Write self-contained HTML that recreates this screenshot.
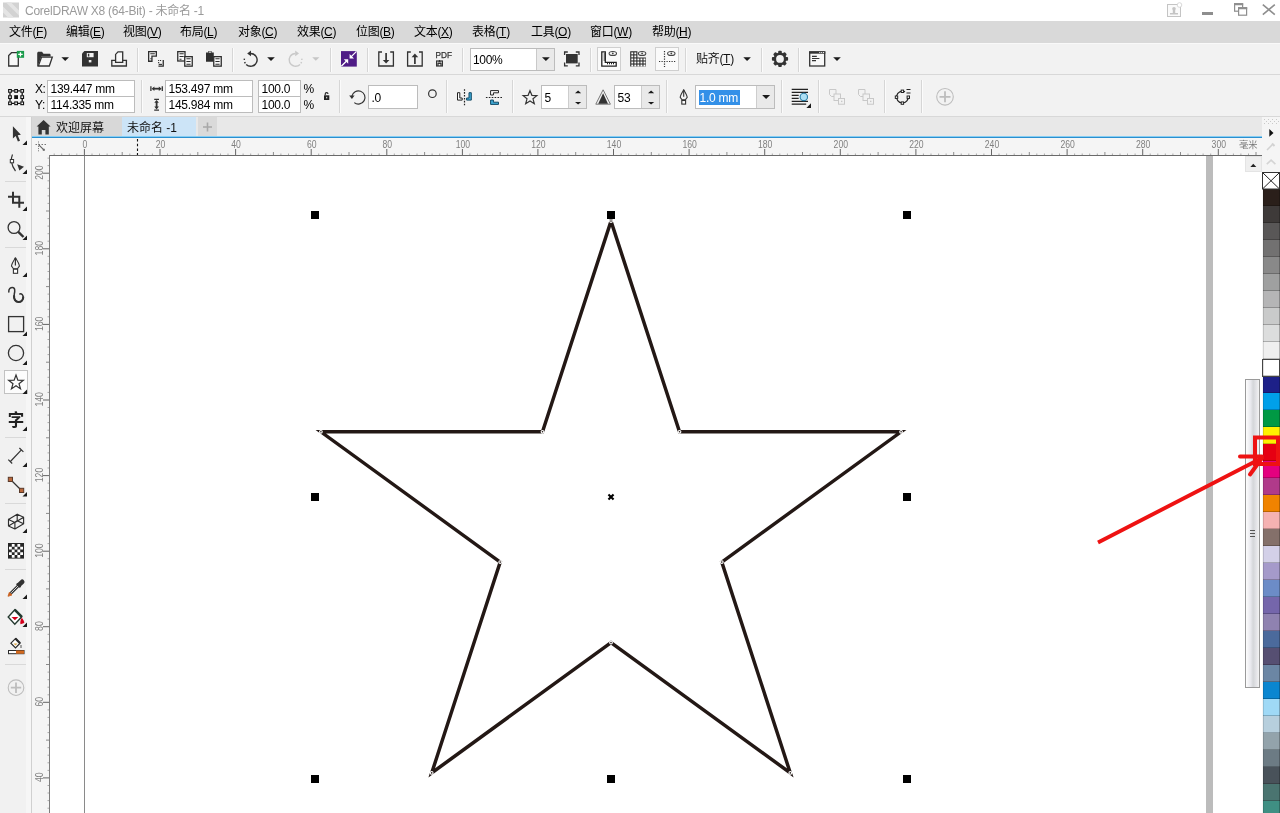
<!DOCTYPE html>
<html><head><meta charset="utf-8"><title>CorelDRAW X8 (64-Bit) - 未命名 -1</title>
<style>
*{box-sizing:border-box;margin:0;padding:0}
html,body{width:1280px;height:813px;overflow:hidden;background:#fff}
body{font-family:"Liberation Sans","Noto Sans CJK SC",sans-serif;font-size:12px;color:#000;position:relative}
#app{position:absolute;left:0;top:0;width:1280px;height:813px;will-change:transform}
.abs,#app div,#app span,#app svg{position:absolute}
#title{left:0;top:0;width:1280px;height:21px;background:#fff}
#title .t{left:25px;top:4px;color:#9a9a9a;font-size:12px;line-height:15px;white-space:nowrap;letter-spacing:-0.240px}
#menu{left:0;top:21px;width:1280px;height:22px;background:#d9d9d9}
#menu span{top:3px;line-height:16px;white-space:nowrap;color:#000;letter-spacing:-0.300px}
#tb1{left:0;top:43px;width:1280px;height:32px;background:#f2f2f2;border-bottom:1px solid #d8d8d8;border-top:1px solid #f9f9f9}
#tb2{left:0;top:75px;width:1280px;height:42px;background:#f2f2f2;border-bottom:1px solid #d8d8d8}
.sep{width:1px;background:#dcdcdc}
.fld{background:#fff;border:1px solid #bcbcbc;font-size:12px;line-height:14px;white-space:nowrap}
.fld span{left:2.500px;top:1px;letter-spacing:-0.250px}
.lb{line-height:14px;white-space:nowrap}
.spin{right:0;top:0;width:18px;height:22px;background:#e9e9e9;border-left:1px solid #cdcdcd}
#tabs{left:32px;top:117px;width:1230px;height:19px;background:#e8e8e8}
#blue{left:32px;top:136px;width:1230px;height:3px;background:linear-gradient(#86cdf2 0,#86cdf2 33.300%,#2b8fcf 33.300%,#2b8fcf 66.600%,#cfeaf8 66.600%)}
#toolbox{left:0;top:117px;width:32px;height:696px;background:linear-gradient(90deg,#f1f1f1 0,#f1f1f1 26px,#f6f6f6 26px);border-right:1px solid #d0d0d0}
#rh{left:32px;top:138px;width:1230px;height:18px;background:#f5f5f5}
#rv{left:32px;top:156px;width:18px;height:657px;background:#f5f5f5}
#canvas{left:50px;top:156px;width:1195px;height:657px;background:#fff}
#pal{left:1262px;top:117px;width:18px;height:696px;background:#f5f5f5}
.sw{left:1262.500px;width:17.500px;height:17px;box-shadow:inset 0 -1px 0 rgba(0,0,0,.22),inset -1px 0 0 rgba(0,0,0,.25),inset 1px 0 0 rgba(0,0,0,.12)}
</style></head><body><div id="app">
<div id="title"><span class="t">CorelDRAW X8 (64-Bit) - 未命名 -1</span></div>
<div id="menu">
<span style="left:9px">文件(<u>F</u>)</span><span style="left:66px">编辑(<u>E</u>)</span><span style="left:123px">视图(<u>V</u>)</span><span style="left:180px">布局(<u>L</u>)</span><span style="left:238px">对象(<u>C</u>)</span><span style="left:297px">效果(<u>C</u>)</span><span style="left:356px">位图(<u>B</u>)</span><span style="left:414px">文本(<u>X</u>)</span><span style="left:472px">表格(<u>T</u>)</span><span style="left:531px">工具(<u>O</u>)</span><span style="left:590px">窗口(<u>W</u>)</span><span style="left:652px">帮助(<u>H</u>)</span>
</div>
<div id="tb1"></div>
<svg id="tb1s" style="left:0;top:43px" width="1280" height="32" viewBox="0 43 1280 32">
<!-- separators -->
<g fill="#d6d6d6"><rect x="137" y="48" width="1" height="24"/><rect x="232" y="48" width="1" height="24"/><rect x="330" y="48" width="1" height="24"/><rect x="367" y="48" width="1" height="24"/><rect x="462" y="48" width="1" height="24"/><rect x="590" y="48" width="1" height="24"/><rect x="685" y="48" width="1" height="24"/><rect x="761" y="48" width="1" height="24"/><rect x="798" y="48" width="1" height="24"/></g>
<g fill="#fbfbfb"><rect x="138" y="48" width="1" height="24"/><rect x="233" y="48" width="1" height="24"/><rect x="331" y="48" width="1" height="24"/><rect x="368" y="48" width="1" height="24"/><rect x="463" y="48" width="1" height="24"/><rect x="591" y="48" width="1" height="24"/><rect x="686" y="48" width="1" height="24"/><rect x="762" y="48" width="1" height="24"/><rect x="799" y="48" width="1" height="24"/></g>
<!-- new -->
<path d="M11.500 52.700H18.300V66H8.700V55.500z" fill="#f8f8f8" stroke="#333" stroke-width="1.300" stroke-linejoin="miter"/>
<rect x="16.800" y="50.900" width="7.300" height="6.900" fill="#1a9b4b"/><path d="M20.450 52.200v4.300M18.200 54.350h4.500" stroke="#fff" stroke-width="1.300"/>
<!-- open -->
<path d="M37.200 66.200V53.300c0-.9.600-1.500 1.500-1.500h3.300l1.500 2h5.800c.8 0 1.300.5 1.300 1.300v1.400H41.300L37.800 66.200z" fill="#333"/>
<path d="M41.500 57.200H52.300L49.300 66H38.300z" fill="#f6f6f6" stroke="#333" stroke-width="1.300" stroke-linejoin="miter"/>
<path d="M61.400 57.200h7.600l-3.800 3.800z" fill="#1a1a1a"/>
<!-- save -->
<path d="M82 53.500l2.400-2.400H98V66.600H82z" fill="#333"/><rect x="86.800" y="53" width="6.800" height="4.200" fill="#f3f3f3"/><rect x="87.900" y="53.700" width="1.400" height="2.800" fill="#333"/><rect x="88.800" y="60" width="2.600" height="2.400" fill="#f3f3f3"/>
<!-- print -->
<path d="M111.800 60.300V66H126.400V60.300" fill="none" stroke="#333" stroke-width="1.300"/>
<path d="M115.600 62.300V54.400l2.400-2.500h4.700V62.300z" fill="#f8f8f8" stroke="#333" stroke-width="1.300"/>
<path d="M111.150 60.300h4.450M122.700 60.300h4.350" stroke="#333" stroke-width="1.300"/>
<!-- cut -->
<g fill="none" stroke="#2e2e2e" stroke-width="1.300"><path d="M148.650 51.650H156.350V56.150H151.950V61.250H148.650z" fill="#f8f8f8"/><path d="M150.300 53.700h4.500M150.300 58.800h1.300" stroke-width="1.100"/><path d="M158.400 66.150h4.850V60"/><path d="M158.700 64.400h3.300" stroke-width="1.100"/><path d="M158.100 60.500h1.100M160 60.500h1.100M158.100 62.600h1.100" stroke-width="1.100"/></g>
<!-- copy -->
<g stroke="#2e2e2e" stroke-width="1.300" fill="#f8f8f8"><rect x="177.750" y="51.650" width="7.250" height="9.350"/><path d="M179.500 53.700h4.200M179.500 56.500h4.200M179.500 59.300h2" fill="none" stroke-width="1.100"/><rect x="184.750" y="56.650" width="7.500" height="9.500"/><path d="M186.400 58.700h4.200M186.400 61.500h4.200M186.400 64.300h4.200" fill="none" stroke-width="1.100"/></g>
<!-- paste -->
<path d="M206 52.500h2v-1.300h3.800v1.300h2V61.800H206z" fill="#2e2e2e"/><rect x="208.700" y="51.700" width="2.500" height="1" fill="#f3f3f3"/>
<g stroke="#2e2e2e" stroke-width="1.300" fill="#f8f8f8"><rect x="213.750" y="56.650" width="7.500" height="9.500"/><path d="M215.400 58.700h4.200M215.400 61.500h4.200M215.400 64.300h4.200" fill="none" stroke-width="1.100"/></g>
<!-- undo -->
<g fill="none" stroke="#333" stroke-width="1.400"><path d="M250.700 53.500A6.400 6.400 0 1 1 246.170 64.430"/><path d="M245.300 63.300A6.400 6.400 0 0 1 244.690 57.700" stroke-dasharray="1.500 1.900"/></g><path d="M251 50.600v5.600l-3.800-2.800z" fill="#333"/>
<path d="M267.200 57.200h7.600l-3.800 3.800z" fill="#1a1a1a"/>
<!-- redo -->
<g fill="none" stroke="#c9c9c9" stroke-width="1.400"><path d="M295.500 53.500A6.400 6.400 0 1 0 300.030 64.430"/><path d="M300.900 63.300A6.400 6.400 0 0 0 301.500 57.700" stroke-dasharray="1.500 1.900"/></g><path d="M295.200 50.600v5.600l3.800-2.800z" fill="#c9c9c9"/>
<path d="M312.200 57.200h7.200l-3.600 3.600z" fill="#c6c6c6"/>
<!-- purple -->
<rect x="341" y="51.100" width="15.800" height="15.500" fill="#4f1c86"/>
<g stroke="#fff" stroke-width="1.300" fill="none"><path d="M356.500 51.400l-5.500 5.500M341.300 66.300l5.500-5.500"/></g><path d="M349.600 54v4.400h4.400zM348.200 63.700v-4.400h-4.400z" fill="#fff"/>
<!-- import -->
<g fill="none" stroke="#333" stroke-width="1.300"><path d="M382 52H378.800V66H393.400V52H390.200"/><path d="M386.100 53v9" stroke-width="1.700"/></g><path d="M382.800 60h6.600l-3.300 3.600z" fill="#333"/>
<!-- export -->
<g fill="none" stroke="#333" stroke-width="1.300"><path d="M410.800 52H407.600V66H422.200V52H419"/><path d="M414.900 55.500v8.500" stroke-width="1.700"/></g><path d="M411.600 57.200h6.600l-3.300-3.600z" fill="#333"/>
<!-- pdf -->
<text x="435.500" y="58" font-size="8.300" font-family="Liberation Sans, sans-serif" fill="#333" stroke="#333" stroke-width=".25" textLength="16.500" lengthAdjust="spacingAndGlyphs">PDF</text>
<g fill="none" stroke="#333" stroke-width="1.200"><rect x="436.600" y="61" width="5.800" height="5"/><path d="M438 66v-2.500h3V66M439.500 61v-1"/></g><path d="M437.500 62.500l2-2 2 2z" fill="#333"/>
<!-- fullscreen -->
<rect x="566" y="54" width="11.700" height="9.400" fill="#333"/><g fill="none" stroke="#333" stroke-width="1.300"><path d="M564.600 55V52h3.200M575.800 52h3.200v3M579 62.600v3.300h-3.200M567.800 65.900h-3.200v-3.300"/></g>
<!-- ruler btn -->
<rect x="597.500" y="47.500" width="23" height="23" fill="#fafafa" stroke="#cfcfcf"/>
<path d="M601.800 51.800H605.300V62.300H616.200V66.100H601.800z" fill="#fff" stroke="#222" stroke-width="1.300"/><path d="M603.600 54h1.700M603.600 56h1.700M603.600 58h1.700M603.600 60h1.700M607.500 62.300v2M609.500 62.300v2M611.500 62.300v2M613.500 62.300v2" stroke="#222" stroke-width="1"/>
<ellipse cx="612.800" cy="53.500" rx="3.700" ry="2" fill="none" stroke="#444" stroke-width="1.100"/><circle cx="612.800" cy="53.500" r=".9" fill="#444"/>
<!-- grid -->
<path d="M630.200 51.300h7.200v6.100h8.500v9.200h-15.700z" fill="#2a2a2a"/>
<g fill="#fff"><rect x="631.30" y="52.40" width="1.950" height="1.950"/><rect x="634.35" y="52.40" width="1.950" height="1.950"/><rect x="631.30" y="55.44" width="1.950" height="1.950"/><rect x="634.35" y="55.44" width="1.950" height="1.950"/><rect x="631.30" y="58.48" width="1.950" height="1.950"/><rect x="634.35" y="58.48" width="1.950" height="1.950"/><rect x="637.40" y="58.48" width="1.950" height="1.950"/><rect x="640.45" y="58.48" width="1.950" height="1.950"/><rect x="643.50" y="58.48" width="1.950" height="1.950"/><rect x="631.30" y="61.52" width="1.950" height="1.950"/><rect x="634.35" y="61.52" width="1.950" height="1.950"/><rect x="637.40" y="61.52" width="1.950" height="1.950"/><rect x="640.45" y="61.52" width="1.950" height="1.950"/><rect x="643.50" y="61.52" width="1.950" height="1.950"/><rect x="631.30" y="64.56" width="1.950" height="1.950"/><rect x="634.35" y="64.56" width="1.950" height="1.950"/><rect x="637.40" y="64.56" width="1.950" height="1.950"/><rect x="640.45" y="64.56" width="1.950" height="1.950"/><rect x="643.50" y="64.56" width="1.950" height="1.950"/></g>
<ellipse cx="642.100" cy="53.500" rx="3.700" ry="2" fill="none" stroke="#444" stroke-width="1.100"/><circle cx="642.100" cy="53.500" r=".9" fill="#444"/>
<!-- guides btn -->
<rect x="655.500" y="47.500" width="23" height="23" fill="#fafafa" stroke="#cfcfcf"/>
<path d="M664.500 51v16M659 61.500h16.500" fill="none" stroke="#333" stroke-width="1.200" stroke-dasharray="1.200 1.300"/>
<ellipse cx="671.300" cy="53.500" rx="3.700" ry="2" fill="none" stroke="#444" stroke-width="1.100"/><circle cx="671.300" cy="53.500" r=".9" fill="#444"/>
<path d="M743.300 57.200h7.600l-3.800 3.800z" fill="#1a1a1a"/>
<!-- gear -->
<g transform="translate(780 58.900)"><g fill="#333"><circle r="6.400"/><g id="tth"><rect x="-1.800" y="-8.100" width="3.600" height="16.200" rx="1"/></g><use href="#tth" transform="rotate(45)"/><use href="#tth" transform="rotate(90)"/><use href="#tth" transform="rotate(135)"/></g><circle r="3.900" fill="#f2f2f2"/></g>
<!-- window -->
<rect x="809.700" y="52" width="15" height="14" fill="#f8f8f8" stroke="#333" stroke-width="1.300"/><rect x="809.100" y="51.300" width="16.200" height="2.400" fill="#333"/><g fill="#fff"><rect x="819.300" y="52" width="1" height="1"/><rect x="821.200" y="52" width="1" height="1"/><rect x="823.100" y="52" width="1" height="1"/></g>
<path d="M812 56.400h4.800M812 58.500h7.400M812 60.600h4" stroke="#333" stroke-width="1.100"/>
<path d="M833.200 57.200h7.600l-3.800 3.800z" fill="#1a1a1a"/>
</svg>
<div class="fld" style="left:469.500px;top:47.500px;width:85px;height:23px"><span style="left:2.500px;top:4px;letter-spacing:-0.350px">100%</span><div style="right:0;top:0;width:18px;height:21px;background:#e9e9e9;border-left:1px solid #c9c9c9"></div></div>
<svg style="left:536px;top:47px" width="20" height="24" viewBox="536 47 20 24"><path d="M542 57.200h7.800l-3.900 3.800z" fill="#1a1a1a"/></svg>
<span style="left:696px;top:51px;letter-spacing:-0.300px;line-height:16px;white-space:nowrap;color:#111">贴齐(<u>T</u>)</span>

<div id="tb2"></div>
<span class="lb" style="left:35px;top:82px;letter-spacing:-0.400px">X:</span><span class="lb" style="left:35px;top:98px;letter-spacing:-0.400px">Y:</span>
<div class="fld" style="left:47px;top:80px;width:88px;height:17px"><span>139.447 mm</span></div>
<div class="fld" style="left:47px;top:96px;width:88px;height:17px"><span>114.335 mm</span></div>
<div class="fld" style="left:165px;top:80px;width:88px;height:17px"><span>153.497 mm</span></div>
<div class="fld" style="left:165px;top:96px;width:88px;height:17px"><span>145.984 mm</span></div>
<div class="fld" style="left:258px;top:80px;width:43px;height:17px"><span>100.0</span></div>
<div class="fld" style="left:258px;top:96px;width:43px;height:17px"><span>100.0</span></div>
<span class="lb" style="left:303.500px;top:82px">%</span><span class="lb" style="left:303.500px;top:98px">%</span>
<div class="fld" style="left:368px;top:85px;width:50px;height:24px"><span style="top:5px">.0</span></div>
<div class="fld" style="left:541px;top:85px;width:46px;height:24px"><span style="top:5px">5</span><div class="spin"></div></div>
<div class="fld" style="left:614px;top:85px;width:46px;height:24px"><span style="top:5px">53</span><div class="spin"></div></div>
<div class="fld" style="left:695px;top:85px;width:80px;height:24px"><div style="left:3px;top:3.500px;width:41px;height:15px;background:#3390e8"></div><span style="top:5px;left:3.500px;color:#fff">1.0 mm</span><div class="spin"></div></div>

<svg id="tb2s" style="left:0;top:75px" width="1280" height="42" viewBox="0 75 1280 42">
<g fill="#d6d6d6"><rect x="141" y="80" width="1" height="33"/><rect x="339" y="80" width="1" height="33"/><rect x="446" y="80" width="1" height="33"/><rect x="512" y="80" width="1" height="33"/><rect x="666" y="80" width="1" height="33"/><rect x="781" y="80" width="1" height="33"/><rect x="818" y="80" width="1" height="33"/><rect x="884" y="80" width="1" height="33"/><rect x="921" y="80" width="1" height="33"/></g>
<g fill="#fbfbfb"><rect x="142" y="80" width="1" height="33"/><rect x="340" y="80" width="1" height="33"/><rect x="447" y="80" width="1" height="33"/><rect x="513" y="80" width="1" height="33"/><rect x="667" y="80" width="1" height="33"/><rect x="782" y="80" width="1" height="33"/><rect x="819" y="80" width="1" height="33"/><rect x="885" y="80" width="1" height="33"/><rect x="922" y="80" width="1" height="33"/></g>
<!-- object icon -->
<g fill="#fff" stroke="#111" stroke-width="1.100"><rect x="8.65" y="89.55" width="2.700" height="2.700"/><rect x="8.65" y="95.75" width="2.700" height="2.700"/><rect x="8.65" y="101.95" width="2.700" height="2.700"/><rect x="14.75" y="89.55" width="2.700" height="2.700"/><rect x="14.75" y="101.95" width="2.700" height="2.700"/><rect x="20.85" y="89.55" width="2.700" height="2.700"/><rect x="20.85" y="95.75" width="2.700" height="2.700"/><rect x="20.85" y="101.95" width="2.700" height="2.700"/></g>
<path d="M11.9 90.9H14.2M18.0 90.9H20.3M11.9 103.3H14.2M18.0 103.3H20.3M10.0 92.8V95.2M10.0 99.0V101.4M22.2 92.8V95.2M22.2 99.0V101.4" stroke="#111" stroke-width="1.300" fill="none"/>
<rect x="14.200" y="95.200" width="3.800" height="3.800" fill="#111"/>
<!-- W icon -->
<g stroke="#333" fill="none"><path d="M150.900 86.300v4.800M162.300 86.300v4.800" stroke-width="1.300"/><path d="M153 88.700h7.200" stroke-width="1.800"/></g><path d="M151.600 88.700l2.800-2.300v4.600zM161.600 88.700l-2.800-2.300v4.600z" fill="#333"/>
<!-- H icon -->
<g stroke="#333" fill="none"><path d="M154.200 99.300h4.800M154.200 110.100h4.800" stroke-width="1.300"/><path d="M156.600 101.500v6.400" stroke-width="1.800"/></g><path d="M156.600 100l-2.300 2.800h4.600zM156.600 109.400l-2.300-2.800h4.600z" fill="#333"/>
<!-- lock -->
<rect x="324" y="95.300" width="5.300" height="4.700" fill="#222"/><path d="M325.200 95.300v-1.300a1.400 1.400 0 0 1 2.800 0" fill="none" stroke="#222" stroke-width="1.100"/><rect x="326.200" y="96.800" width="1" height="1.600" fill="#eee"/>
<!-- rotate -->
<path d="M354.300 102.600A6.600 6.600 0 1 0 351.900 96.200" fill="none" stroke="#333" stroke-width="1.200"/><path d="M349.200 95.400h5.400l-2.700 3.700z" fill="#333"/>
<circle cx="432.400" cy="93.700" r="3.800" fill="none" stroke="#333" stroke-width="1.200"/>
<!-- mirror h -->
<path d="M457.500 92.700H459.800V98H462.200V100.100H457.500Z" fill="#fff" stroke="#222" stroke-width="1"/>
<path d="M471.300 92.700H469V98H466.600V100.100H471.300Z" fill="#3fa9d6" stroke="#124a66" stroke-width="1"/>
<path d="M464.500 89.200v16" stroke="#222" stroke-width="1.200" stroke-dasharray="1.600 1.300"/>
<!-- mirror v -->
<path d="M490.600 90.600H498.500V92.800H493.400V95H490.600Z" fill="#fff" stroke="#222" stroke-width="1"/>
<path d="M490.600 104.400H498.500V102.200H493.400V100H490.600Z" fill="#3fa9d6" stroke="#124a66" stroke-width="1"/>
<path d="M485.900 97.500h16.200" stroke="#222" stroke-width="1.200" stroke-dasharray="1.600 1.300"/>
<!-- star -->
<path d="M530 90.600l1.900 4.700 5 .3-3.900 3.200 1.300 4.900-4.300-2.700-4.300 2.700 1.300-4.900-3.900-3.200 5-.3z" fill="none" stroke="#333" stroke-width="1.200"/>
<!-- sharp -->
<path d="M603.100 89.800l7.300 14.400h-14.600z" fill="none" stroke="#777" stroke-width="1"/><path d="M603.100 93.200l4.900 10.500h-9.800z" fill="#333"/>
<!-- pen -->
<g fill="none" stroke="#333" stroke-width="1.100"><path d="M683.700 90c-1.800 2.700-3.300 5.200-3.500 7.300l1.800 2.500h3.400l1.800-2.500c-.2-2.100-1.700-4.600-3.500-7.300z"/><path d="M683.700 90.500v6.300" stroke-width="1.100"/><rect x="681.800" y="100.500" width="3.800" height="3.600" fill="#fff"/></g><circle cx="683.700" cy="90.300" r=".9" fill="#333"/>
<!-- wrap -->
<path d="M791.700 89.400h16.300M791.700 92.300h16.300M791.700 95.300h7M791.700 98.300h7M791.700 101.300h16.300M791.700 104.200h14.500" stroke="#222" stroke-width="1.200"/>
<circle cx="803.800" cy="96.900" r="3.700" fill="#aee0f5" stroke="#2a7ea6" stroke-width="1.100"/><path d="M811 103.300v4.600h-4.600z" fill="#1a1a1a"/>
<!-- grey icons -->
<g fill="#f2f2f2" stroke="#c8c8c8" stroke-width="1"><path d="M829.500 89.500h6.500v7h-4.500l-2-2z"/><rect x="834" y="94" width="6.500" height="6.500"/><rect x="838.500" y="98.500" width="6" height="5.700"/><rect x="841" y="100.700" width="1.400" height="1.400" fill="#c8c8c8" stroke="none"/>
<path d="M858.500 89.500h6.500v7h-4.500l-2-2z"/><rect x="863" y="94" width="6.500" height="6.500"/><rect x="867.500" y="98.500" width="6" height="5.700"/><rect x="870" y="100.700" width="1.400" height="1.400" fill="#c8c8c8" stroke="none"/></g>
<!-- convert -->
<path d="M905 91.800A5.900 5.900 0 1 0 908.200 96" fill="none" stroke="#222" stroke-width="1.200"/>
<g fill="#fff" stroke="#222" stroke-width="1"><rect x="901.200" y="90.100" width="2.400" height="2.400"/><rect x="895.300" y="96" width="2.400" height="2.400"/><rect x="901.200" y="101.900" width="2.400" height="2.400"/><rect x="907.100" y="96" width="2.400" height="2.400"/></g>
<path d="M906.500 89.500h4M906.500 93h4" stroke="#222" stroke-width="1.100"/>
<!-- plus -->
<g fill="none" stroke="#bdbdbd"><circle cx="945" cy="96.800" r="8.300" stroke-width="1.100"/><path d="M945 91.300v11M939.500 96.800h11" stroke-width="1.800"/></g>
<!-- spinner & dropdown arrows -->
<path d="M575 93.200l3.100-2.600 3.100 2.600zM575 102l3.100 2.600 3.100-2.600zM648 93.200l3.100-2.600 3.100 2.600zM648 102l3.100 2.600 3.100-2.600zM762.100 95h8l-4 3.900z" fill="#1a1a1a"/>
</svg>

<div id="toolbox"></div>
<svg id="tbx" style="left:0;top:0" width="32" height="813" viewBox="0 0 32 813">
<g fill="#d9d9d9">
<rect x="5" y="181" width="21" height="1"/><rect x="5" y="247" width="21" height="1"/><rect x="5" y="437" width="21" height="1"/><rect x="5" y="503" width="21" height="1"/><rect x="5" y="569" width="21" height="1"/><rect x="5" y="664" width="21" height="1"/>
</g>
<!-- pick -->
<path d="M12.900 126.200V138.600L15.700 136.100L17.900 141.600L20 140.700L17.700 135.300L20.900 134.700Z" fill="#333"/>
<!-- shape -->
<g fill="none" stroke="#333" stroke-width="1.200">
<path d="M12.500 154.500c-2 4-1.500 11 3 16.500"/><rect x="10.300" y="159.500" width="3.300" height="3.300" fill="#fff" stroke-width="1"/>
</g>
<path d="M17.200 164.300l6.800 2.500-4.600 3.700z" fill="#333"/>
<!-- crop -->
<g fill="none" stroke="#333" stroke-width="2">
<path d="M13 191.800V202.800H24M8 196.800H19.300V207.800"/>
</g>
<!-- zoom -->
<g fill="none" stroke="#333">
<circle cx="14" cy="227.500" r="5.900" stroke-width="1.300"/><path d="M18.300 231.800l5.200 5.200" stroke-width="2.400"/>
</g>
<!-- pen -->
<g fill="none" stroke="#333" stroke-width="1.100">
<path d="M15.400 258c-2 3-3.700 5.800-3.900 8l2 2.800h3.900l2-2.800c-.2-2.200-1.900-5-3.900-8z"/><path d="M15.400 258.500v7" stroke-width="1.200"/><rect x="13.400" y="269.200" width="4.200" height="4.100" fill="#fff"/>
</g><circle cx="15.400" cy="258.600" r="1" fill="#333"/>
<!-- artistic media -->
<path d="M8.800 292C8.500 289 10.500 287.400 12.500 287.400C15.200 287.400 15 291 14.300 294C13.400 298 15 302 18.500 302C21.500 302 23.200 299.500 23.200 297.300C23.200 295 21.500 293.400 19.900 294" fill="none" stroke="#333" stroke-width="1.500" stroke-linecap="round"/>
<path d="M14.100 296C13.600 299 15.500 302 18.500 302C21.500 302 23.200 299.500 23.200 297.300" fill="none" stroke="#333" stroke-width="2.100" stroke-linecap="round"/>
<!-- rect -->
<rect x="8.600" y="316.600" width="15" height="15" fill="none" stroke="#333" stroke-width="1.300"/>
<!-- ellipse -->
<circle cx="16" cy="353" r="7.600" fill="none" stroke="#333" stroke-width="1.300"/>
<!-- star selected -->
<rect x="4.500" y="370.500" width="23" height="23" fill="#fcfcfc" stroke="#c2c2c2" stroke-width="1"/>
<path d="M16.00 375.00L17.85 380.15L23.32 380.32L19.00 383.67L20.53 388.93L16.00 385.85L11.47 388.93L13.00 383.67L8.68 380.32L14.15 380.15Z" fill="none" stroke="#333" stroke-width="1.200" stroke-linejoin="miter"/>
<!-- text -->
<text x="16" y="426" text-anchor="middle" font-size="16.500" font-weight="bold" font-family="Liberation Sans, Noto Sans CJK SC, sans-serif" fill="#222">字</text>
<!-- dimension -->
<g fill="none" stroke="#333" stroke-width="1.200"><path d="M10.400 461.500L21.400 449.900M8.300 459.600l3.900 3.900M19.400 448l4 3.900"/></g>
<!-- connector -->
<path d="M10.500 479.500l11 11" stroke="#333" stroke-width="1.200"/>
<rect x="8.300" y="477.300" width="4.200" height="4.200" fill="#b9673a" stroke="#5a3a2a" stroke-width="1"/><rect x="19.500" y="488.300" width="4.200" height="4.200" fill="#b9673a" stroke="#5a3a2a" stroke-width="1"/>
<!-- cube -->
<path d="M17.2 514.2L23.6 517.2M17.2 520.8L23.6 523.8M17.2 514.2L17.2 520.8M23.6 517.2L14.9 522.4M23.6 523.8L14.9 529.0M23.6 517.2L23.6 523.8M14.9 522.4L8.5 519.4M14.9 529.0L8.5 526.0M14.9 522.4L14.9 529.0M8.5 519.4L17.2 514.2M8.5 526.0L17.2 520.8M8.5 519.4L8.5 526.0" fill="none" stroke="#2e2e2e" stroke-width="1.150" stroke-linecap="round"/>
<!-- checker -->
<rect x="8" y="543" width="16" height="15.600" fill="#262626"/>
<g fill="#fff"><rect x="11.80" y="544.00" width="2.800" height="2.750"/><rect x="17.40" y="544.00" width="2.800" height="2.750"/><rect x="9.00" y="546.75" width="2.800" height="2.750"/><rect x="14.60" y="546.75" width="2.800" height="2.750"/><rect x="20.20" y="546.75" width="2.800" height="2.750"/><rect x="11.80" y="549.50" width="2.800" height="2.750"/><rect x="17.40" y="549.50" width="2.800" height="2.750"/><rect x="9.00" y="552.25" width="2.800" height="2.750"/><rect x="14.60" y="552.25" width="2.800" height="2.750"/><rect x="20.20" y="552.25" width="2.800" height="2.750"/><rect x="11.80" y="555.00" width="2.800" height="2.750"/><rect x="17.40" y="555.00" width="2.800" height="2.750"/></g>
<!-- eyedropper -->
<path d="M10.800 593.200L18.800 585.200" stroke="#333" stroke-width="3"/><path d="M11.200 592.800L18.400 585.600" stroke="#e4e4e4" stroke-width=".9"/>
<path d="M19.800 584.200L22.200 581.800" stroke="#333" stroke-width="4.600" stroke-linecap="round"/>
<path d="M16.700 583.500L20.500 587.300" stroke="#333" stroke-width="2"/>
<path d="M8 596.300L9.300 592.300L12 595z" fill="#c8601e" stroke="#c8601e" stroke-width=".8" stroke-linejoin="round"/>
<!-- fill -->
<path d="M14.800 609.800l7 7-7 7.400-6.600-7.200z" fill="#fff" stroke="#24392f" stroke-width="1.400"/>
<path d="M14.600 609.600l7.200 7.200" stroke="#24392f" stroke-width="2.600"/>
<path d="M11.500 617h6.800l-3.400 3.300z" fill="#d6001c"/>
<path d="M21.800 617.800c1.600 2 2.500 3.700 2.500 5.200l-3.800 1.300c-.6-2 .1-4.500 1.300-6.500z" fill="#d6001c"/>
<!-- outline -->
<path d="M15.500 638.500l4.500 4.700-4.500 4.800-4.600-4.800z" fill="#fff" stroke="#2a2a2a" stroke-width="1.200"/><path d="M15.400 638.400l4.700 4.800" stroke="#2a2a2a" stroke-width="2.200"/>
<path d="M13.500 643.500h4l-2 2z" fill="#d9a441"/>
<path d="M21 645v3" stroke="#555" stroke-width="1"/>
<rect x="8.500" y="650.500" width="15.500" height="3.200" fill="#fff" stroke="#2a2a2a" stroke-width="1"/><rect x="16" y="650.500" width="8" height="3.200" fill="#d2691e"/>
<!-- plus -->
<g fill="none" stroke="#bdbdbd"><circle cx="16" cy="687.700" r="7.800" stroke-width="1.100"/><path d="M16 682.500v10.400M10.800 687.700h10.400" stroke-width="1.800"/></g>
<!-- flyout triangles -->
<g fill="#1a1a1a">
<path d="M27 140.500v4.500h-4.500z"/><path d="M27 169.500v4.500h-4.500z"/><path d="M27 206.500v4.500h-4.500z"/><path d="M27 235.500v4.500h-4.500z"/>
<path d="M27 272.500v4.500h-4.500z"/><path d="M27 331.500v4.500h-4.500z"/><path d="M27 360.500v4.500h-4.500z"/><path d="M27 389.500v4.500h-4.500z"/><path d="M27 426.500v4.500h-4.500z"/>
<path d="M27 462.500v4.500h-4.500z"/><path d="M27 492v4.500h-4.500z"/><path d="M27 528.500v4.500h-4.500z"/><path d="M27 594.500v4.500h-4.500z"/><path d="M27 622.500v4.500h-4.500z"/>
</g>
</svg>

<div id="tabs"></div>
<div id="blue"></div>
<div id="rh"></div>
<div id="rv"></div>
<div id="canvas"></div>
<div id="pal"></div>
<!-- tabs -->
<div style="left:32px;top:117px;width:90px;height:19px;background:#d8d8d8"></div>
<div style="left:122px;top:117px;width:74px;height:19px;background:#cce4f7"></div>
<div style="left:198px;top:117px;width:19px;height:19px;background:#dadada"></div>
<span style="left:56px;top:120px;line-height:16px;white-space:nowrap;color:#111">欢迎屏幕</span>
<span style="left:127px;top:120px;line-height:16px;white-space:nowrap;color:#111">未命名 -1</span>
<svg style="left:0;top:0" width="1280" height="160" viewBox="0 0 1280 160">
<path d="M43.600 120l7 6.500h-1.800v8h-3.400v-4.400h-3.600v4.400h-3.400v-8h-1.800z" fill="#333"/>
<path d="M207.500 122.500v9M203 127h9" stroke="#a8a8a8" stroke-width="1.600"/>
<!-- title icon -->
<rect x="3" y="2.500" width="16" height="15" fill="#d2d2d2"/><path d="M19 10.500l-8-8h-5l13 13zM14 17.500l-11-11v6l5 5z" fill="#e4e4e4"/>
<!-- user icon -->
<rect x="1167.500" y="4.500" width="13" height="12" fill="#fafafa" stroke="#c4c4c4"/><circle cx="1174" cy="8.700" r="1.800" fill="#c4c4c4"/><path d="M1172.800 10h2.400v3h2.800v1.600h-8v-1.600h2.800z" fill="#c4c4c4"/><circle cx="1179.500" cy="5" r="2.300" fill="#fff" stroke="#cfcfcf" stroke-width=".8"/>
<!-- min -->
<rect x="1202" y="12" width="11" height="3" fill="#8e8e8e"/>
<!-- restore -->
<g fill="#fff" stroke="#8e8e8e" stroke-width="1.200"><rect x="1234.600" y="3.700" width="8" height="7.500"/><rect x="1238.600" y="7.700" width="8" height="7.500"/></g><path d="M1234 4.200h9.200M1238 8.200h9.200" stroke="#8e8e8e" stroke-width="2"/>
<!-- close -->
<path d="M1262.800 4.600l12 10M1274.800 4.600l-12 10" stroke="#8e8e8e" stroke-width="1.600"/>
<!-- palette top -->
<g fill="#c9c9c9"><rect x="1264" y="119" width="1" height="1"/><rect x="1268" y="119" width="1" height="1"/><rect x="1272" y="119" width="1" height="1"/><rect x="1276" y="119" width="1" height="1"/><rect x="1266" y="121" width="1" height="1"/><rect x="1270" y="121" width="1" height="1"/><rect x="1274" y="121" width="1" height="1"/><rect x="1278" y="121" width="1" height="1"/><rect x="1264" y="123" width="1" height="1"/><rect x="1268" y="123" width="1" height="1"/><rect x="1272" y="123" width="1" height="1"/><rect x="1276" y="123" width="1" height="1"/></g>
<path d="M1269.300 129v7.800l4.200-3.900z" fill="#111"/>
<path d="M1267 150l5.500-5.500" stroke="#d2d2d2" stroke-width="1.600"/><path d="M1272 143.500l2.500 2.500" stroke="#d2d2d2" stroke-width="2"/>
</svg>

<div class="sw" style="top:189px;background:#2a1f1a"></div><div class="sw" style="top:206px;background:#3e3a39"></div><div class="sw" style="top:223px;background:#595757"></div><div class="sw" style="top:240px;background:#727171"></div><div class="sw" style="top:257px;background:#898989"></div><div class="sw" style="top:274px;background:#9fa0a0"></div><div class="sw" style="top:291px;background:#b5b5b6"></div><div class="sw" style="top:308px;background:#c9caca"></div><div class="sw" style="top:325px;background:#dcdddd"></div><div class="sw" style="top:342px;background:#efefef"></div><div class="sw" style="top:359px;background:#ffffff"></div><div class="sw" style="top:376px;background:#1d2088"></div><div class="sw" style="top:393px;background:#00a0e9"></div><div class="sw" style="top:410px;background:#009944"></div><div class="sw" style="top:427px;background:#fff100"></div><div class="sw" style="top:444px;background:#e60012"></div><div class="sw" style="top:461px;background:#e4007f"></div><div class="sw" style="top:478px;background:#b03a8a"></div><div class="sw" style="top:495px;background:#f08300"></div><div class="sw" style="top:512px;background:#f5b2b2"></div><div class="sw" style="top:529px;background:#84706a"></div><div class="sw" style="top:546px;background:#d3d0e8"></div><div class="sw" style="top:563px;background:#a59aca"></div><div class="sw" style="top:580px;background:#6c8cc7"></div><div class="sw" style="top:597px;background:#7566ab"></div><div class="sw" style="top:614px;background:#8f82b0"></div><div class="sw" style="top:631px;background:#4b6a9c"></div><div class="sw" style="top:648px;background:#564f72"></div><div class="sw" style="top:665px;background:#6b86a4"></div><div class="sw" style="top:682px;background:#0a86d0"></div><div class="sw" style="top:699px;background:#9fd9f6"></div><div class="sw" style="top:716px;background:#b7cfdd"></div><div class="sw" style="top:733px;background:#93a3ab"></div><div class="sw" style="top:750px;background:#6c7b84"></div><div class="sw" style="top:767px;background:#49525a"></div><div class="sw" style="top:784px;background:#4a7470"></div><div class="sw" style="top:801px;background:#3f8f83"></div>
<!-- scroll -->
<div style="left:1245px;top:156px;width:17px;height:16px;background:#efefef;border:1px solid #e4e4e4"></div>
<div style="left:1245px;top:379px;width:15px;height:309px;border:1px solid #9a9a9a;background:linear-gradient(90deg,#fdfdfd 0,#e9e9ee 35%,#d4d6d9 55%,#e4e4e8 80%,#f3f3f3 100%)"></div>
<svg style="left:1240px;top:150px" width="40" height="663" viewBox="1240 150 40 663">
<path d="M1250.300 167l3-3.300 3 3.300z" fill="#222"/>
<path d="M1266.800 164.200l4.300-4 4.300 4" fill="none" stroke="#d4d4d4" stroke-width="1.600"/>
<path d="M1250 530.500h5M1250 533.500h5M1250 536.500h5" stroke="#555" stroke-width="1"/>
<rect x="1262.500" y="172.500" width="17" height="16.500" fill="#fff" stroke="#333" stroke-width="1"/><path d="M1263 173l16 15.500M1279 173l-16 15.500" stroke="#222" stroke-width="1"/>
<rect x="1262.500" y="359.500" width="17" height="17" fill="none" stroke="#444" stroke-width="1"/>
</svg>

<svg id="draw" style="left:0;top:0" width="1280" height="813" viewBox="0 0 1280 813">
<g fill="#8a8a8a"><rect x="53.7" y="153.5" width="1" height="1.5" fill="#aaa"/><rect x="61.2" y="153.5" width="1" height="1.5" fill="#aaa"/><rect x="68.8" y="153.5" width="1" height="1.5" fill="#aaa"/><rect x="76.3" y="153.5" width="1" height="1.5" fill="#aaa"/><rect x="83.9" y="149" width="1" height="6" fill="#666"/><rect x="91.5" y="153.5" width="1" height="1.5" fill="#aaa"/><rect x="99.0" y="153.5" width="1" height="1.5" fill="#aaa"/><rect x="106.6" y="153.5" width="1" height="1.5" fill="#aaa"/><rect x="114.1" y="153.5" width="1" height="1.5" fill="#aaa"/><rect x="121.7" y="152" width="1" height="3" fill="#8c8c8c"/><rect x="129.3" y="153.5" width="1" height="1.5" fill="#aaa"/><rect x="136.8" y="153.5" width="1" height="1.5" fill="#aaa"/><rect x="144.4" y="153.5" width="1" height="1.5" fill="#aaa"/><rect x="151.9" y="153.5" width="1" height="1.5" fill="#aaa"/><rect x="159.5" y="149" width="1" height="6" fill="#666"/><rect x="167.0" y="153.5" width="1" height="1.5" fill="#aaa"/><rect x="174.6" y="153.5" width="1" height="1.5" fill="#aaa"/><rect x="182.2" y="153.5" width="1" height="1.5" fill="#aaa"/><rect x="189.7" y="153.5" width="1" height="1.5" fill="#aaa"/><rect x="197.3" y="152" width="1" height="3" fill="#8c8c8c"/><rect x="204.8" y="153.5" width="1" height="1.5" fill="#aaa"/><rect x="212.4" y="153.5" width="1" height="1.5" fill="#aaa"/><rect x="220.0" y="153.5" width="1" height="1.5" fill="#aaa"/><rect x="227.5" y="153.5" width="1" height="1.5" fill="#aaa"/><rect x="235.1" y="149" width="1" height="6" fill="#666"/><rect x="242.6" y="153.5" width="1" height="1.5" fill="#aaa"/><rect x="250.2" y="153.5" width="1" height="1.5" fill="#aaa"/><rect x="257.8" y="153.5" width="1" height="1.5" fill="#aaa"/><rect x="265.3" y="153.5" width="1" height="1.5" fill="#aaa"/><rect x="272.9" y="152" width="1" height="3" fill="#8c8c8c"/><rect x="280.4" y="153.5" width="1" height="1.5" fill="#aaa"/><rect x="288.0" y="153.5" width="1" height="1.5" fill="#aaa"/><rect x="295.6" y="153.5" width="1" height="1.5" fill="#aaa"/><rect x="303.1" y="153.5" width="1" height="1.5" fill="#aaa"/><rect x="310.7" y="149" width="1" height="6" fill="#666"/><rect x="318.2" y="153.5" width="1" height="1.5" fill="#aaa"/><rect x="325.8" y="153.5" width="1" height="1.5" fill="#aaa"/><rect x="333.3" y="153.5" width="1" height="1.5" fill="#aaa"/><rect x="340.9" y="153.5" width="1" height="1.5" fill="#aaa"/><rect x="348.5" y="152" width="1" height="3" fill="#8c8c8c"/><rect x="356.0" y="153.5" width="1" height="1.5" fill="#aaa"/><rect x="363.6" y="153.5" width="1" height="1.5" fill="#aaa"/><rect x="371.1" y="153.5" width="1" height="1.5" fill="#aaa"/><rect x="378.7" y="153.5" width="1" height="1.5" fill="#aaa"/><rect x="386.3" y="149" width="1" height="6" fill="#666"/><rect x="393.8" y="153.5" width="1" height="1.5" fill="#aaa"/><rect x="401.4" y="153.5" width="1" height="1.5" fill="#aaa"/><rect x="408.9" y="153.5" width="1" height="1.5" fill="#aaa"/><rect x="416.5" y="153.5" width="1" height="1.5" fill="#aaa"/><rect x="424.1" y="152" width="1" height="3" fill="#8c8c8c"/><rect x="431.6" y="153.5" width="1" height="1.5" fill="#aaa"/><rect x="439.2" y="153.5" width="1" height="1.5" fill="#aaa"/><rect x="446.7" y="153.5" width="1" height="1.5" fill="#aaa"/><rect x="454.3" y="153.5" width="1" height="1.5" fill="#aaa"/><rect x="461.9" y="149" width="1" height="6" fill="#666"/><rect x="469.4" y="153.5" width="1" height="1.5" fill="#aaa"/><rect x="477.0" y="153.5" width="1" height="1.5" fill="#aaa"/><rect x="484.5" y="153.5" width="1" height="1.5" fill="#aaa"/><rect x="492.1" y="153.5" width="1" height="1.5" fill="#aaa"/><rect x="499.6" y="152" width="1" height="3" fill="#8c8c8c"/><rect x="507.2" y="153.5" width="1" height="1.5" fill="#aaa"/><rect x="514.8" y="153.5" width="1" height="1.5" fill="#aaa"/><rect x="522.3" y="153.5" width="1" height="1.5" fill="#aaa"/><rect x="529.9" y="153.5" width="1" height="1.5" fill="#aaa"/><rect x="537.4" y="149" width="1" height="6" fill="#666"/><rect x="545.0" y="153.5" width="1" height="1.5" fill="#aaa"/><rect x="552.6" y="153.5" width="1" height="1.5" fill="#aaa"/><rect x="560.1" y="153.5" width="1" height="1.5" fill="#aaa"/><rect x="567.7" y="153.5" width="1" height="1.5" fill="#aaa"/><rect x="575.2" y="152" width="1" height="3" fill="#8c8c8c"/><rect x="582.8" y="153.5" width="1" height="1.5" fill="#aaa"/><rect x="590.4" y="153.5" width="1" height="1.5" fill="#aaa"/><rect x="597.9" y="153.5" width="1" height="1.5" fill="#aaa"/><rect x="605.5" y="153.5" width="1" height="1.5" fill="#aaa"/><rect x="613.0" y="149" width="1" height="6" fill="#666"/><rect x="620.6" y="153.5" width="1" height="1.5" fill="#aaa"/><rect x="628.1" y="153.5" width="1" height="1.5" fill="#aaa"/><rect x="635.7" y="153.5" width="1" height="1.5" fill="#aaa"/><rect x="643.3" y="153.5" width="1" height="1.5" fill="#aaa"/><rect x="650.8" y="152" width="1" height="3" fill="#8c8c8c"/><rect x="658.4" y="153.5" width="1" height="1.5" fill="#aaa"/><rect x="665.9" y="153.5" width="1" height="1.5" fill="#aaa"/><rect x="673.5" y="153.5" width="1" height="1.5" fill="#aaa"/><rect x="681.1" y="153.5" width="1" height="1.5" fill="#aaa"/><rect x="688.6" y="149" width="1" height="6" fill="#666"/><rect x="696.2" y="153.5" width="1" height="1.5" fill="#aaa"/><rect x="703.7" y="153.5" width="1" height="1.5" fill="#aaa"/><rect x="711.3" y="153.5" width="1" height="1.5" fill="#aaa"/><rect x="718.9" y="153.5" width="1" height="1.5" fill="#aaa"/><rect x="726.4" y="152" width="1" height="3" fill="#8c8c8c"/><rect x="734.0" y="153.5" width="1" height="1.5" fill="#aaa"/><rect x="741.5" y="153.5" width="1" height="1.5" fill="#aaa"/><rect x="749.1" y="153.5" width="1" height="1.5" fill="#aaa"/><rect x="756.7" y="153.5" width="1" height="1.5" fill="#aaa"/><rect x="764.2" y="149" width="1" height="6" fill="#666"/><rect x="771.8" y="153.5" width="1" height="1.5" fill="#aaa"/><rect x="779.3" y="153.5" width="1" height="1.5" fill="#aaa"/><rect x="786.9" y="153.5" width="1" height="1.5" fill="#aaa"/><rect x="794.4" y="153.5" width="1" height="1.5" fill="#aaa"/><rect x="802.0" y="152" width="1" height="3" fill="#8c8c8c"/><rect x="809.6" y="153.5" width="1" height="1.5" fill="#aaa"/><rect x="817.1" y="153.5" width="1" height="1.5" fill="#aaa"/><rect x="824.7" y="153.5" width="1" height="1.5" fill="#aaa"/><rect x="832.2" y="153.5" width="1" height="1.5" fill="#aaa"/><rect x="839.8" y="149" width="1" height="6" fill="#666"/><rect x="847.4" y="153.5" width="1" height="1.5" fill="#aaa"/><rect x="854.9" y="153.5" width="1" height="1.5" fill="#aaa"/><rect x="862.5" y="153.5" width="1" height="1.5" fill="#aaa"/><rect x="870.0" y="153.5" width="1" height="1.5" fill="#aaa"/><rect x="877.6" y="152" width="1" height="3" fill="#8c8c8c"/><rect x="885.2" y="153.5" width="1" height="1.5" fill="#aaa"/><rect x="892.7" y="153.5" width="1" height="1.5" fill="#aaa"/><rect x="900.3" y="153.5" width="1" height="1.5" fill="#aaa"/><rect x="907.8" y="153.5" width="1" height="1.5" fill="#aaa"/><rect x="915.4" y="149" width="1" height="6" fill="#666"/><rect x="922.9" y="153.5" width="1" height="1.5" fill="#aaa"/><rect x="930.5" y="153.5" width="1" height="1.5" fill="#aaa"/><rect x="938.1" y="153.5" width="1" height="1.5" fill="#aaa"/><rect x="945.6" y="153.5" width="1" height="1.5" fill="#aaa"/><rect x="953.2" y="152" width="1" height="3" fill="#8c8c8c"/><rect x="960.7" y="153.5" width="1" height="1.5" fill="#aaa"/><rect x="968.3" y="153.5" width="1" height="1.5" fill="#aaa"/><rect x="975.9" y="153.5" width="1" height="1.5" fill="#aaa"/><rect x="983.4" y="153.5" width="1" height="1.5" fill="#aaa"/><rect x="991.0" y="149" width="1" height="6" fill="#666"/><rect x="998.5" y="153.5" width="1" height="1.5" fill="#aaa"/><rect x="1006.1" y="153.5" width="1" height="1.5" fill="#aaa"/><rect x="1013.7" y="153.5" width="1" height="1.5" fill="#aaa"/><rect x="1021.2" y="153.5" width="1" height="1.5" fill="#aaa"/><rect x="1028.8" y="152" width="1" height="3" fill="#8c8c8c"/><rect x="1036.3" y="153.5" width="1" height="1.5" fill="#aaa"/><rect x="1043.9" y="153.5" width="1" height="1.5" fill="#aaa"/><rect x="1051.5" y="153.5" width="1" height="1.5" fill="#aaa"/><rect x="1059.0" y="153.5" width="1" height="1.5" fill="#aaa"/><rect x="1066.6" y="149" width="1" height="6" fill="#666"/><rect x="1074.1" y="153.5" width="1" height="1.5" fill="#aaa"/><rect x="1081.7" y="153.5" width="1" height="1.5" fill="#aaa"/><rect x="1089.2" y="153.5" width="1" height="1.5" fill="#aaa"/><rect x="1096.8" y="153.5" width="1" height="1.5" fill="#aaa"/><rect x="1104.4" y="152" width="1" height="3" fill="#8c8c8c"/><rect x="1111.9" y="153.5" width="1" height="1.5" fill="#aaa"/><rect x="1119.5" y="153.5" width="1" height="1.5" fill="#aaa"/><rect x="1127.0" y="153.5" width="1" height="1.5" fill="#aaa"/><rect x="1134.6" y="153.5" width="1" height="1.5" fill="#aaa"/><rect x="1142.2" y="149" width="1" height="6" fill="#666"/><rect x="1149.7" y="153.5" width="1" height="1.5" fill="#aaa"/><rect x="1157.3" y="153.5" width="1" height="1.5" fill="#aaa"/><rect x="1164.8" y="153.5" width="1" height="1.5" fill="#aaa"/><rect x="1172.4" y="153.5" width="1" height="1.5" fill="#aaa"/><rect x="1180.0" y="152" width="1" height="3" fill="#8c8c8c"/><rect x="1187.5" y="153.5" width="1" height="1.5" fill="#aaa"/><rect x="1195.1" y="153.5" width="1" height="1.5" fill="#aaa"/><rect x="1202.6" y="153.5" width="1" height="1.5" fill="#aaa"/><rect x="1210.2" y="153.5" width="1" height="1.5" fill="#aaa"/><rect x="1217.8" y="149" width="1" height="6" fill="#666"/><rect x="1225.3" y="153.5" width="1" height="1.5" fill="#aaa"/><rect x="1232.9" y="153.5" width="1" height="1.5" fill="#aaa"/><rect x="1240.4" y="153.5" width="1" height="1.5" fill="#aaa"/><rect x="1248.0" y="153.5" width="1" height="1.5" fill="#aaa"/><rect x="1255.5" y="152" width="1" height="3" fill="#8c8c8c"/><rect x="47.5" y="157.6" width="1.5" height="1" fill="#aaa"/><rect x="47.5" y="165.1" width="1.5" height="1" fill="#aaa"/><rect x="43" y="172.7" width="6" height="1" fill="#666"/><rect x="47.5" y="180.3" width="1.5" height="1" fill="#aaa"/><rect x="47.5" y="187.8" width="1.5" height="1" fill="#aaa"/><rect x="47.5" y="195.4" width="1.5" height="1" fill="#aaa"/><rect x="47.5" y="202.9" width="1.5" height="1" fill="#aaa"/><rect x="46" y="210.5" width="3" height="1" fill="#8c8c8c"/><rect x="47.5" y="218.1" width="1.5" height="1" fill="#aaa"/><rect x="47.5" y="225.6" width="1.5" height="1" fill="#aaa"/><rect x="47.5" y="233.2" width="1.5" height="1" fill="#aaa"/><rect x="47.5" y="240.7" width="1.5" height="1" fill="#aaa"/><rect x="43" y="248.3" width="6" height="1" fill="#666"/><rect x="47.5" y="255.8" width="1.5" height="1" fill="#aaa"/><rect x="47.5" y="263.4" width="1.5" height="1" fill="#aaa"/><rect x="47.5" y="271.0" width="1.5" height="1" fill="#aaa"/><rect x="47.5" y="278.5" width="1.5" height="1" fill="#aaa"/><rect x="46" y="286.1" width="3" height="1" fill="#8c8c8c"/><rect x="47.5" y="293.6" width="1.5" height="1" fill="#aaa"/><rect x="47.5" y="301.2" width="1.5" height="1" fill="#aaa"/><rect x="47.5" y="308.8" width="1.5" height="1" fill="#aaa"/><rect x="47.5" y="316.3" width="1.5" height="1" fill="#aaa"/><rect x="43" y="323.9" width="6" height="1" fill="#666"/><rect x="47.5" y="331.4" width="1.5" height="1" fill="#aaa"/><rect x="47.5" y="339.0" width="1.5" height="1" fill="#aaa"/><rect x="47.5" y="346.6" width="1.5" height="1" fill="#aaa"/><rect x="47.5" y="354.1" width="1.5" height="1" fill="#aaa"/><rect x="46" y="361.7" width="3" height="1" fill="#8c8c8c"/><rect x="47.5" y="369.2" width="1.5" height="1" fill="#aaa"/><rect x="47.5" y="376.8" width="1.5" height="1" fill="#aaa"/><rect x="47.5" y="384.4" width="1.5" height="1" fill="#aaa"/><rect x="47.5" y="391.9" width="1.5" height="1" fill="#aaa"/><rect x="43" y="399.5" width="6" height="1" fill="#666"/><rect x="47.5" y="407.0" width="1.5" height="1" fill="#aaa"/><rect x="47.5" y="414.6" width="1.5" height="1" fill="#aaa"/><rect x="47.5" y="422.1" width="1.5" height="1" fill="#aaa"/><rect x="47.5" y="429.7" width="1.5" height="1" fill="#aaa"/><rect x="46" y="437.3" width="3" height="1" fill="#8c8c8c"/><rect x="47.5" y="444.8" width="1.5" height="1" fill="#aaa"/><rect x="47.5" y="452.4" width="1.5" height="1" fill="#aaa"/><rect x="47.5" y="459.9" width="1.5" height="1" fill="#aaa"/><rect x="47.5" y="467.5" width="1.5" height="1" fill="#aaa"/><rect x="43" y="475.1" width="6" height="1" fill="#666"/><rect x="47.5" y="482.6" width="1.5" height="1" fill="#aaa"/><rect x="47.5" y="490.2" width="1.5" height="1" fill="#aaa"/><rect x="47.5" y="497.7" width="1.5" height="1" fill="#aaa"/><rect x="47.5" y="505.3" width="1.5" height="1" fill="#aaa"/><rect x="46" y="512.9" width="3" height="1" fill="#8c8c8c"/><rect x="47.5" y="520.4" width="1.5" height="1" fill="#aaa"/><rect x="47.5" y="528.0" width="1.5" height="1" fill="#aaa"/><rect x="47.5" y="535.5" width="1.5" height="1" fill="#aaa"/><rect x="47.5" y="543.1" width="1.5" height="1" fill="#aaa"/><rect x="43" y="550.7" width="6" height="1" fill="#666"/><rect x="47.5" y="558.2" width="1.5" height="1" fill="#aaa"/><rect x="47.5" y="565.8" width="1.5" height="1" fill="#aaa"/><rect x="47.5" y="573.3" width="1.5" height="1" fill="#aaa"/><rect x="47.5" y="580.9" width="1.5" height="1" fill="#aaa"/><rect x="46" y="588.4" width="3" height="1" fill="#8c8c8c"/><rect x="47.5" y="596.0" width="1.5" height="1" fill="#aaa"/><rect x="47.5" y="603.6" width="1.5" height="1" fill="#aaa"/><rect x="47.5" y="611.1" width="1.5" height="1" fill="#aaa"/><rect x="47.5" y="618.7" width="1.5" height="1" fill="#aaa"/><rect x="43" y="626.2" width="6" height="1" fill="#666"/><rect x="47.5" y="633.8" width="1.5" height="1" fill="#aaa"/><rect x="47.5" y="641.4" width="1.5" height="1" fill="#aaa"/><rect x="47.5" y="648.9" width="1.5" height="1" fill="#aaa"/><rect x="47.5" y="656.5" width="1.5" height="1" fill="#aaa"/><rect x="46" y="664.0" width="3" height="1" fill="#8c8c8c"/><rect x="47.5" y="671.6" width="1.5" height="1" fill="#aaa"/><rect x="47.5" y="679.2" width="1.5" height="1" fill="#aaa"/><rect x="47.5" y="686.7" width="1.5" height="1" fill="#aaa"/><rect x="47.5" y="694.3" width="1.5" height="1" fill="#aaa"/><rect x="43" y="701.8" width="6" height="1" fill="#666"/><rect x="47.5" y="709.4" width="1.5" height="1" fill="#aaa"/><rect x="47.5" y="716.9" width="1.5" height="1" fill="#aaa"/><rect x="47.5" y="724.5" width="1.5" height="1" fill="#aaa"/><rect x="47.5" y="732.1" width="1.5" height="1" fill="#aaa"/><rect x="46" y="739.6" width="3" height="1" fill="#8c8c8c"/><rect x="47.5" y="747.2" width="1.5" height="1" fill="#aaa"/><rect x="47.5" y="754.7" width="1.5" height="1" fill="#aaa"/><rect x="47.5" y="762.3" width="1.5" height="1" fill="#aaa"/><rect x="47.5" y="769.9" width="1.5" height="1" fill="#aaa"/><rect x="43" y="777.4" width="6" height="1" fill="#666"/><rect x="47.5" y="785.0" width="1.5" height="1" fill="#aaa"/><rect x="47.5" y="792.5" width="1.5" height="1" fill="#aaa"/><rect x="47.5" y="800.1" width="1.5" height="1" fill="#aaa"/><rect x="47.5" y="807.7" width="1.5" height="1" fill="#aaa"/></g>
<g fill="#808080" font-size="10" font-family="Liberation Sans, sans-serif"><text x="84.9" y="147.8" text-anchor="middle" textLength="4.8" lengthAdjust="spacingAndGlyphs">0</text><text x="160.5" y="147.8" text-anchor="middle" textLength="9.6" lengthAdjust="spacingAndGlyphs">20</text><text x="236.1" y="147.8" text-anchor="middle" textLength="9.6" lengthAdjust="spacingAndGlyphs">40</text><text x="311.7" y="147.8" text-anchor="middle" textLength="9.6" lengthAdjust="spacingAndGlyphs">60</text><text x="387.3" y="147.8" text-anchor="middle" textLength="9.6" lengthAdjust="spacingAndGlyphs">80</text><text x="462.9" y="147.8" text-anchor="middle" textLength="14.4" lengthAdjust="spacingAndGlyphs">100</text><text x="538.4" y="147.8" text-anchor="middle" textLength="14.4" lengthAdjust="spacingAndGlyphs">120</text><text x="614.0" y="147.8" text-anchor="middle" textLength="14.4" lengthAdjust="spacingAndGlyphs">140</text><text x="689.6" y="147.8" text-anchor="middle" textLength="14.4" lengthAdjust="spacingAndGlyphs">160</text><text x="765.2" y="147.8" text-anchor="middle" textLength="14.4" lengthAdjust="spacingAndGlyphs">180</text><text x="840.8" y="147.8" text-anchor="middle" textLength="14.4" lengthAdjust="spacingAndGlyphs">200</text><text x="916.4" y="147.8" text-anchor="middle" textLength="14.4" lengthAdjust="spacingAndGlyphs">220</text><text x="992.0" y="147.8" text-anchor="middle" textLength="14.4" lengthAdjust="spacingAndGlyphs">240</text><text x="1067.6" y="147.8" text-anchor="middle" textLength="14.4" lengthAdjust="spacingAndGlyphs">260</text><text x="1143.2" y="147.8" text-anchor="middle" textLength="14.4" lengthAdjust="spacingAndGlyphs">280</text><text x="1218.8" y="147.8" text-anchor="middle" textLength="14.4" lengthAdjust="spacingAndGlyphs">300</text><text transform="translate(43.2,172.6) rotate(-90)" text-anchor="middle" textLength="14.4" lengthAdjust="spacingAndGlyphs">200</text><text transform="translate(43.2,248.2) rotate(-90)" text-anchor="middle" textLength="14.4" lengthAdjust="spacingAndGlyphs">180</text><text transform="translate(43.2,323.8) rotate(-90)" text-anchor="middle" textLength="14.4" lengthAdjust="spacingAndGlyphs">160</text><text transform="translate(43.2,399.4) rotate(-90)" text-anchor="middle" textLength="14.4" lengthAdjust="spacingAndGlyphs">140</text><text transform="translate(43.2,475.0) rotate(-90)" text-anchor="middle" textLength="14.4" lengthAdjust="spacingAndGlyphs">120</text><text transform="translate(43.2,550.6) rotate(-90)" text-anchor="middle" textLength="14.4" lengthAdjust="spacingAndGlyphs">100</text><text transform="translate(43.2,626.1) rotate(-90)" text-anchor="middle" textLength="9.6" lengthAdjust="spacingAndGlyphs">80</text><text transform="translate(43.2,701.7) rotate(-90)" text-anchor="middle" textLength="9.6" lengthAdjust="spacingAndGlyphs">60</text><text transform="translate(43.2,777.3) rotate(-90)" text-anchor="middle" textLength="9.6" lengthAdjust="spacingAndGlyphs">40</text><text x="1239" y="148" font-size="9.300" fill="#777" font-family="Liberation Sans, Noto Sans CJK SC, sans-serif">毫米</text></g>
<rect x="49" y="155" width="1213" height="1" fill="#6a6a6a"/>
<rect x="49" y="155" width="1" height="658" fill="#7d7d7d"/>
<rect x="84" y="156" width="1" height="657" fill="#8a8a8a"/>
<rect x="1206" y="156" width="7" height="657" fill="#bcbcbc"/>
<polygon points="611.0,221.1 679.5,431.8 901.1,431.8 721.8,562.1 790.3,772.9 611.0,642.6 431.7,772.9 500.2,562.1 320.9,431.8 542.5,431.8" fill="none" stroke="#231815" stroke-width="3.45" stroke-linejoin="miter" stroke-miterlimit="10"/>
<g fill="#fff"><circle cx="611.0" cy="221.1" r="1.9"/><circle cx="679.5" cy="431.8" r="1.9"/><circle cx="901.1" cy="431.8" r="1.9"/><circle cx="721.8" cy="562.1" r="1.9"/><circle cx="790.3" cy="772.9" r="1.9"/><circle cx="611.0" cy="642.6" r="1.9"/><circle cx="431.7" cy="772.9" r="1.9"/><circle cx="500.2" cy="562.1" r="1.9"/><circle cx="320.9" cy="431.8" r="1.9"/><circle cx="542.5" cy="431.8" r="1.9"/></g><g fill="#231815"><circle cx="611.0" cy="221.1" r="0.8"/><circle cx="679.5" cy="431.8" r="0.8"/><circle cx="901.1" cy="431.8" r="0.8"/><circle cx="721.8" cy="562.1" r="0.8"/><circle cx="790.3" cy="772.9" r="0.8"/><circle cx="611.0" cy="642.6" r="0.8"/><circle cx="431.7" cy="772.9" r="0.8"/><circle cx="500.2" cy="562.1" r="0.8"/><circle cx="320.9" cy="431.8" r="0.8"/><circle cx="542.5" cy="431.8" r="0.8"/></g>
<!-- ruler corner -->
<g stroke="#777" stroke-width="1" fill="none"><path d="M35.500 144.500h11" stroke-dasharray="1.500 1.500"/><path d="M38.500 141.500v11" stroke-dasharray="1 1.200"/><path d="M38.800 144.800l5 5" stroke="#666" stroke-width="1.200"/></g><rect x="42.800" y="148.800" width="2" height="2" fill="#666"/>
<!-- mouse marker -->
<path d="M137.500 139v16" stroke="#111" stroke-width="1.100" stroke-dasharray="2.600 2.100"/>
<g fill="#000">
<rect x="311" y="211" width="8" height="8"/><rect x="607" y="211" width="8" height="8"/><rect x="903" y="211" width="8" height="8"/>
<rect x="311" y="493" width="8" height="8"/><rect x="903" y="493" width="8" height="8"/>
<rect x="311" y="775" width="8" height="8"/><rect x="607" y="775" width="8" height="8"/><rect x="903" y="775" width="8" height="8"/>
</g>
<path d="M609.200 495.200l3.600 3.600M612.800 495.200l-3.600 3.600" stroke="#000" stroke-width="2.100" stroke-linecap="square"/>
<!-- red annotation -->
<rect x="1255" y="437.500" width="23" height="26.500" fill="none" stroke="#ee1212" stroke-width="4"/>
<path d="M1098 542.500L1260 459" stroke="#ee1212" stroke-width="3.800"/>
<path d="M1240 456.500H1262M1250 474.500L1262 458" stroke="#ee1212" stroke-width="4" stroke-linecap="round" fill="none"/>

</svg>
</div></body></html>
